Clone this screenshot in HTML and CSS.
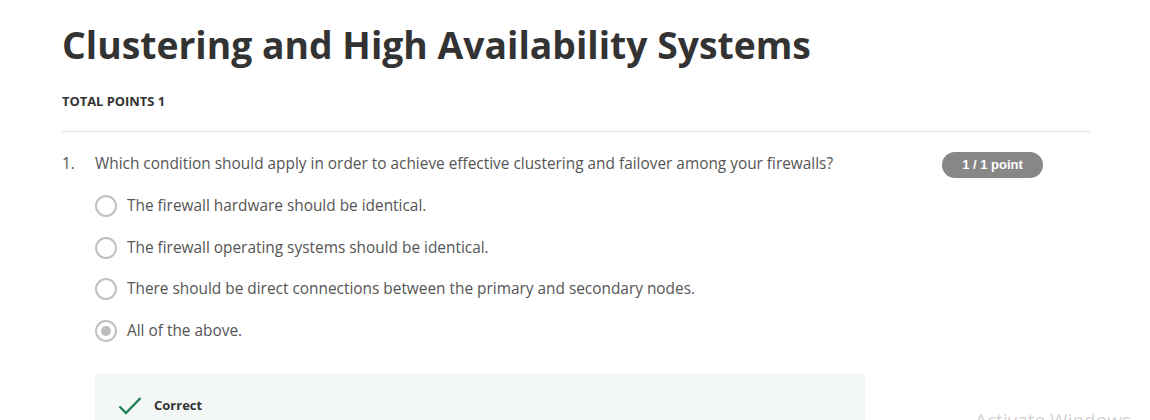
FILE: index.html
```html
<!DOCTYPE html>
<html lang="en">
<head>
<meta charset="utf-8">
<title>Clustering and High Availability Systems</title>
<link rel="stylesheet" href="styles.css">
</head>
<body>
<main class="page">
  <h1 class="title">Clustering and High Availability Systems</h1>
  <div class="total">TOTAL POINTS 1</div>
  <hr class="divider">
  <section class="question">
    <div class="q-head">
      <span class="q-num">1.</span>
      <span class="q-text">Which condition should apply in order to achieve effective clustering and failover among your firewalls?</span>
      <span class="badge">1 / 1 point</span>
    </div>
    <ul class="options">
      <li class="option"><span class="radio"></span><span>The firewall hardware should be identical.</span></li>
      <li class="option"><span class="radio"></span><span>The firewall operating systems should be identical.</span></li>
      <li class="option"><span class="radio"></span><span>There should be direct connections between the primary and secondary nodes.</span></li>
      <li class="option"><span class="radio checked"></span><span>All of the above.</span></li>
    </ul>
    <div class="feedback">
      <svg class="check" width="24" height="20" viewBox="0 0 24 20"><path d="M1.5 10.5 L8 17 L22.5 2" fill="none" stroke="#1f8354" stroke-width="2.4"/></svg>
      <span class="fb-label">Correct</span>
    </div>
  </section>
</main>
<div class="watermark">Activate Windows</div>
</body>
</html>
```
FILE: styles.css
```css
html, body {
  margin: 0;
  padding: 0;
  background: #ffffff;
  overflow: hidden;
}
body {
  font-family: "Open Sans", "DejaVu Sans", sans-serif;
  color: #555555;
  width: 1150px;
  height: 420px;
  position: relative;
}
.page {
  padding: 19px 0 0 62px;
  width: 1028px;
}
.title {
  margin: 0;
  font-size: 37.3px;
  font-weight: 700;
  line-height: 52px;
  color: #333333;
}
.total {
  margin-top: 22px;
  font-size: 12.9px;
  font-weight: 700;
  line-height: 16px;
  color: #333333;
}
.divider {
  margin: 22px 0 0 0;
  border: 0;
  border-top: 1px solid #e1e1e1;
  height: 0;
}
.question {
  padding-top: 21px;
}
.q-head {
  display: flex;
  align-items: flex-start;
  font-size: 15.4px;
  line-height: 22px;
}
.q-num {
  width: 33px;
  flex: none;
}
.q-text {
  flex: 1;
}
.badge {
  flex: none;
  margin-top: -1px;
  margin-right: 47px;
  background: #878787;
  color: #ffffff;
  font-family: "Liberation Sans", Arial, sans-serif;
  font-weight: 700;
  font-size: 13px;
  line-height: 26px;
  height: 26px;
  width: 101px;
  text-align: center;
  border-radius: 13px;
}
.options {
  list-style: none;
  margin: 17px 0 0 33px;
  padding: 0;
  display: flex;
  flex-direction: column;
  gap: 19.5px;
}
.option {
  display: flex;
  align-items: center;
  gap: 10px;
  font-size: 15.4px;
  line-height: 22px;
}
.radio {
  width: 18px;
  height: 18px;
  border: 2px solid #c0c0c0;
  border-radius: 50%;
  flex: none;
  display: flex;
  align-items: center;
  justify-content: center;
  box-sizing: content-box;
}
.radio.checked::after {
  content: "";
  width: 10px;
  height: 10px;
  border-radius: 50%;
  background: #bdbdbd;
}
.feedback {
  margin: 32px 0 0 33px;
  width: 770px;
  height: 60px;
  background: #f3f8f6;
  display: flex;
  align-items: flex-start;
  padding: 21px 0 0 23px;
  box-sizing: border-box;
  gap: 12px;
}
.check {
  flex: none;
  margin-top: 1px;
}
.fb-label {
  font-size: 13px;
  font-weight: 700;
  color: #333333;
  line-height: 20px;
}
.watermark {
  position: absolute;
  left: 975px;
  top: 411px;
  font-family: "Open Sans", sans-serif;
  font-size: 19px;
  line-height: 19px;
  color: rgba(0, 0, 0, 0.2);
  white-space: nowrap;
}
```
